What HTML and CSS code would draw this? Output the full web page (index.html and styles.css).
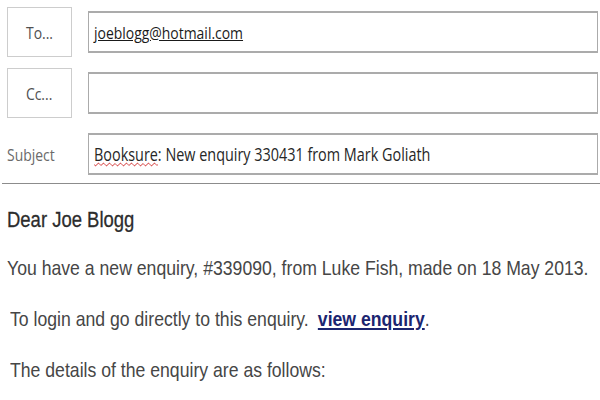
FILE: index.html
```html
<!DOCTYPE html>
<html>
<head>
    <meta charset="utf-8">
    <link rel="stylesheet" href="styles.css">
</head>
<body>
    <div class="compose">
        <div class="compose-row">
            <button class="addr-btn"><span class="narrow centred">To...</span></button>
            <div class="field"><span class="narrow recipient">joeblogg@hotmail.com</span></div>
        </div>
        <div class="compose-row">
            <button class="addr-btn"><span class="narrow centred">Cc...</span></button>
            <div class="field"></div>
        </div>
        <div class="compose-row">
            <span class="field-label"><span class="narrow">Subject</span></span>
            <div class="field subject"><span class="narrow"><span class="misspelt">Booksure</span>: New enquiry 330431 from Mark Goliath</span></div>
        </div>
    </div>

    <div class="message">
        <p class="greeting"><span class="narrow">Dear Joe Blogg</span></p>
        <p><span class="narrow">You have a new enquiry, #339090, from Luke Fish, made on 18 May 2013.</span></p>
        <p class="indent"><span class="narrow">To login and go directly to this enquiry. <a href="#" class="enquiry-link">view enquiry</a>.</span></p>
        <p class="indent"><span class="narrow">The details of the enquiry are as follows:</span></p>
    </div>
</body>
</html>
```

FILE: styles.css
```css
:root {
    --field-border: #ababab;
    --button-border: #cdcdcd;
    --label-color: #6a6a6a;
    --text-color: #464646;
    --link-color: #1b2570;
}

html, body {
    margin: 0;
    background: #ffffff;
}

body {
    width: 600px;
    height: 400px;
    overflow: hidden;
}

/* squeezed text, the app draws everything in a condensed face */
.narrow {
    display: inline-block;
    white-space: nowrap;
    transform: scaleX(0.82);
    transform-origin: left center;
}

.narrow.centred {
    transform-origin: center center;
}

/* Header fields */
.compose {
    margin-left: 2px;
    padding: 7px 2px 4px 5px;
    border-bottom: 1px solid #8c8c8c;
    display: flex;
    flex-direction: column;
    gap: 11px;
    font-family: 'Open Sans', sans-serif;
}

.compose-row {
    display: flex;
    align-items: center;
    gap: 16px;
    height: 50px;
}

.addr-btn {
    width: 65px;
    height: 50px;
    flex: none;
    background: #ffffff;
    border: 1px solid var(--button-border);
    color: #505050;
    font-family: inherit;
    font-size: 17px;
    padding: 0;
}

.field-label {
    width: 65px;
    flex: none;
    color: var(--label-color);
    font-size: 17px;
}

.field {
    flex: 1;
    height: 42px;
    box-sizing: border-box;
    border: 1px solid var(--field-border);
    border-top-width: 2px;
    border-bottom-width: 2px;
    padding: 0 5px;
    display: flex;
    align-items: center;
    font-size: 17px;
    color: #262626;
    overflow: hidden;
}

.field.subject {
    font-size: 18px;
}

.field.subject .narrow {
    transform: scaleX(0.8);
}

.recipient {
    text-decoration: underline;
    color: #1a1a1a;
}

.misspelt {
    text-decoration: underline wavy #cc2222;
    text-decoration-thickness: 1px;
}

/* Message body */
.message {
    padding: 0 7px;
    font-family: 'Liberation Sans', Arial, sans-serif;
    font-size: 21px;
    color: var(--text-color);
}

.message .narrow {
    transform: scaleX(0.84);
}

.message p {
    margin: 0 0 27px 0;
    line-height: 24px;
    overflow: hidden;
}

.message .greeting {
    margin-top: 24px;
    margin-bottom: 24px;
    font-size: 22px;
    color: #2c2c2c;
    -webkit-text-stroke: 0.3px #2c2c2c;
}

.message .indent {
    padding-left: 3px;
}

.enquiry-link {
    color: var(--link-color);
    font-weight: bold;
    text-decoration: underline;
    margin-left: 5px;
}
```
